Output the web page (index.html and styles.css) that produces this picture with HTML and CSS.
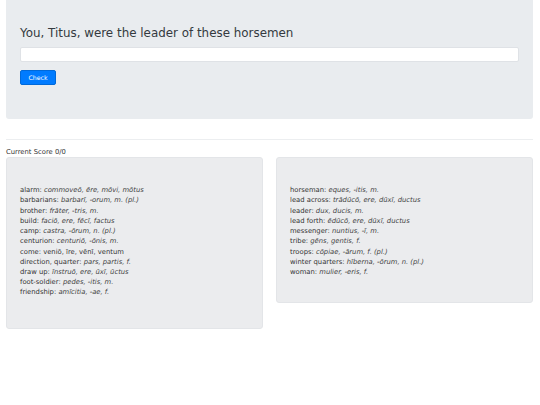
FILE: index.html
```html
<!DOCTYPE html>
<html lang="en">
<head>
    <meta charset="UTF-8">
    <meta name="viewport" content="width=device-width, initial-scale=1.0">
    <title>Vocabulary Practice</title>
    <link rel="stylesheet" href="styles.css">
</head>
<body>
    <div class="page">
        <div class="jumbotron">
            <h3 class="question">You, Titus, were the leader of these horsemen</h3>
            <input type="text" class="answer">
            <button class="btn-check">Check</button>
        </div>
        <hr>
        <div class="score">Current Score 0/0</div>
        <div class="cards">
            <div class="card card-long">
                <div>alarm: <em>commoveō, ēre, mōvi, mōtus</em></div>
                <div>barbarians: <em>barbarī, -orum, m. (pl.)</em></div>
                <div>brother: <em>frāter, -tris, m.</em></div>
                <div>build: <em>faciō, ere, fēcī, factus</em></div>
                <div>camp: <em>castra, -ōrum, n. (pl.)</em></div>
                <div>centurion: <em>centuriō, -ōnis, m.</em></div>
                <div>come: veniō, īre, vēnī, ventum</div>
                <div>direction, quarter: <em>pars, partis, f.</em></div>
                <div>draw up: <em>īnstruō, ere, ūxī, ūctus</em></div>
                <div>foot-soldier: <em>pedes, -itis, m.</em></div>
                <div>friendship: <em>amīcitia, -ae, f.</em></div>
            </div>
            <div class="card">
                <div>horseman: <em>eques, -itis, m.</em></div>
                <div>lead across: <em>trādūcō, ere, dūxī, ductus</em></div>
                <div>leader: <em>dux, ducis, m.</em></div>
                <div>lead forth: <em>ēdūcō, ere, dūxī, ductus</em></div>
                <div>messenger: <em>nuntius, -ī, m.</em></div>
                <div>tribe: <em>gēns, gentis, f.</em></div>
                <div>troops: <em>cōpiae, -ārum, f. (pl.)</em></div>
                <div>winter quarters: <em>hīberna, -ōrum, n. (pl.)</em></div>
                <div>woman: <em>mulier, -eris, f.</em></div>
            </div>
        </div>
    </div>
</body>
</html>
```

FILE: styles.css
```css
body { margin: 0; font-family: "DejaVu Sans", sans-serif; color: #212529; background: #fff; }
.page { padding: 0 7px 0 6px; }
.jumbotron { background: #e9ecef; border-radius: 0 0 3px 3px; padding: 26px 14px 34px; }
.question { font-size: 11.9px; font-weight: 400; margin: 0 0 7px; line-height: 1.2; color: #343a40; }
.answer { display: block; box-sizing: border-box; width: 100%; height: 15px; margin: 0 0 8px; border: 1px solid #dfe2e6; border-radius: 2px; background: #fff; padding: 0 5px; }
.btn-check { display: block; width: 36px; height: 15px; padding: 0; border: 1px solid #0069d9; border-radius: 2px; background: #007bff; color: #fff; font-family: inherit; font-size: 6.2px; }
hr { border: 0; border-top: 1px solid #eceef0; margin: 20px 0 7px; }
.score { font-size: 6.8px; line-height: 10px; color: #333; }
.cards { display: flex; align-items: flex-start; gap: 13px; }
.card { flex: 1; background: #ebecee; border: 1px solid #e3e5e8; border-radius: 3px; padding: 27px 13px 25px; font-size: 6.8px; line-height: 10.2px; color: #333; }
.card-long { padding-bottom: 30px; }
.card em { color: #444; }
```
